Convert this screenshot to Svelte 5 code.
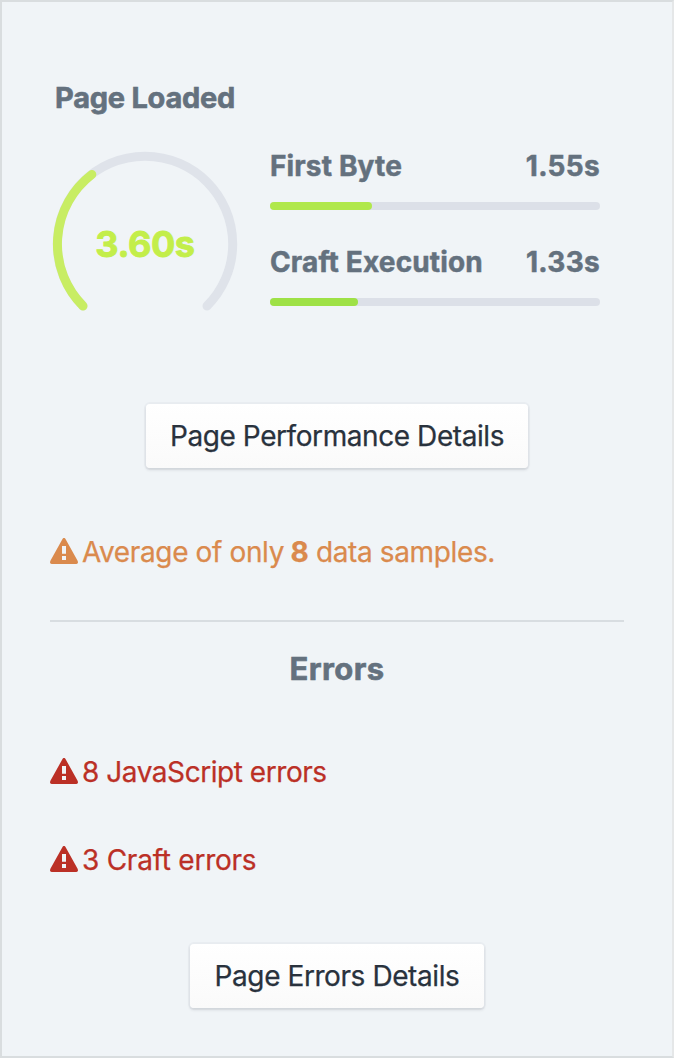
<script>
  const timings = [
    { label: 'First Byte', value: '1.55s', percent: 31, color: '#b0e84b' },
    { label: 'Craft Execution', value: '1.33s', percent: 26.7, color: '#9ee146' }
  ];
</script>

{#snippet alertIcon()}
  <svg class="icon" width="28" height="28" viewBox="0 0 28 28" aria-hidden="true">
    <path fill="currentColor" fill-rule="evenodd" d="M12.5 1 Q14 -1.2 15.5 1 L27.6 22.8 Q28.8 26 26.3 26 H1.7 Q-.8 26 .4 22.8Z M12 8 V15.8 H16 V8Z M12 18 V22 H16 V18Z" />
  </svg>
{/snippet}

<main class="panel">
  <h2 class="title">Page Loaded</h2>
  <section class="summary">
    <div class="gauge">
      <svg width="190" height="190" viewBox="0 0 190 190" fill="none" stroke-width="9" stroke-linecap="round">
        <path stroke="#dfe3ea" d="M33 157 A87.7 87.7 0 1 1 157 157" />
        <path stroke="#c8ed63" d="M33 157 A87.7 87.7 0 0 1 41.8 25.5" />
      </svg>
      <span class="total">3.60s</span>
    </div>
    <div class="timings">
      {#each timings as t}
        <div class="timing">
          <div class="row"><span>{t.label}</span><span class="value">{t.value}</span></div>
          <div class="track"><div class="fill" style="width: {t.percent}%; background: {t.color}"></div></div>
        </div>
      {/each}
    </div>
  </section>
  <button class="btn performance">Page Performance Details</button>
  <p class="note warning">{@render alertIcon()}<span>Average of only <b>8</b> data samples.</span></p>
  <hr />
  <h2 class="errors-title">Errors</h2>
  <p class="note error js">{@render alertIcon()}<span>8 JavaScript errors</span></p>
  <p class="note error craft-errors">{@render alertIcon()}<span>3 Craft errors</span></p>
  <button class="btn errors">Page Errors Details</button>
</main>

<style>
  :global(body) { margin: 0; }
  .panel {
    box-sizing: border-box;
    width: 674px;
    height: 1058px;
    padding: 76px 48px 0;
    display: flex;
    flex-direction: column;
    border: 2px solid #d9dddf;
    border-right-color: #e5e7e8;
    background: #f0f4f7;
    color: #64717e;
    font-family: Inter, sans-serif;
    white-space: nowrap;
    -webkit-text-stroke: 0.25px currentColor;
  }
  h2 {
    margin: 0;
    font-size: 29px;
    line-height: 40px;
    font-weight: 700;
    -webkit-text-stroke: 0.6px currentColor;
  }
  .title { padding-left: 5px; letter-spacing: -0.25px; }
  .summary { display: flex; height: 190px; margin-top: 31px; }
  .gauge { display: grid; width: 190px; height: 190px; place-items: center; }
  .gauge > * { grid-area: 1 / 1; }
  .total {
    font-size: 36px;
    line-height: 44px;
    font-weight: 700;
    color: #c3ee4a;
    letter-spacing: -0.4px;
    -webkit-text-stroke: 0.9px currentColor;
  }
  .timings { width: 330px; margin-left: 30px; }
  .timing { height: 96px; }
  .row {
    display: flex;
    justify-content: space-between;
    height: 53px;
    font-size: 28px;
    line-height: 34px;
    font-weight: 700;
    letter-spacing: 0.15px;
    -webkit-text-stroke: 0.5px currentColor;
  }
  .value { letter-spacing: 0.3px; }
  .track { height: 8px; border-radius: 4px; background: #dce0e8; }
  .fill { height: 8px; border-radius: 4px; }
  .btn {
    align-self: center;
    flex: none;
    height: 64px;
    padding: 0;
    border: 0;
    border-radius: 4px;
    background: linear-gradient(#fff, #fafafa);
    box-shadow: 0 0 0 2px rgba(49, 49, 93, .035), 0 2px 3px rgba(31, 41, 51, .13);
    color: #29323d;
    font: 400 28px/64px Inter, sans-serif;
    letter-spacing: -0.42px;
    -webkit-text-stroke: 0.25px currentColor;
  }
  .performance { width: 382px; margin-top: 65px; }
  .errors { width: 294px; margin-top: 64px; }
  .note {
    display: flex;
    align-items: center;
    height: 40px;
    margin: 0;
    gap: 4px;
    font-size: 28px;
    line-height: 40px;
    letter-spacing: -0.37px;
  }
  .note b { margin: 0 0 0 -1px; }
  .icon { flex: none; }
  .warning { margin-top: 64px; color: #da8a4d; }
  .error { margin-top: 48px; color: #bb3026; }
  .js { margin-top: 63px; letter-spacing: -0.45px; }
  .craft-errors { letter-spacing: -0.25px; }
  hr { width: 574px; height: 2px; margin: 48px 0 27px; border: 0; background: #d8dde1; }
  .errors-title { text-align: center; font-size: 31px; letter-spacing: 0.4px; }
</style>
